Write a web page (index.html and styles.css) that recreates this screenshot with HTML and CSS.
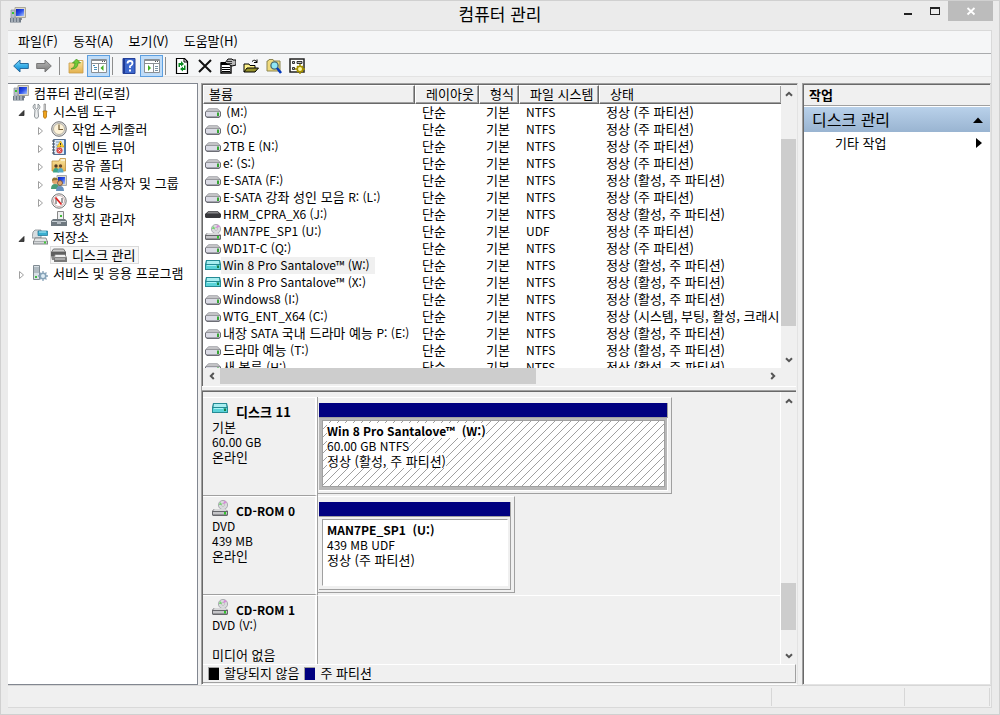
FILE: index.html
```html
<!DOCTYPE html>
<html lang="ko">
<head>
<meta charset="utf-8">
<title>컴퓨터 관리</title>
<link rel="stylesheet" href="styles.css">
</head>
<body>
<svg class="defs" aria-hidden="true">
  <defs>
    <linearGradient id="g-blue" x1="0" y1="0" x2="0" y2="1"><stop offset="0" stop-color="#8fdcf8"/><stop offset=".5" stop-color="#38aee8"/><stop offset="1" stop-color="#1581cc"/></linearGradient>
    <linearGradient id="g-gray" x1="0" y1="0" x2="0" y2="1"><stop offset="0" stop-color="#bbb"/><stop offset="1" stop-color="#777"/></linearGradient>
    <linearGradient id="g-screen" x1="0" y1="0" x2="1" y2="1"><stop offset="0" stop-color="#0a1fb8"/><stop offset=".5" stop-color="#2c50e8"/><stop offset="1" stop-color="#a9c6ff"/></linearGradient>
    <linearGradient id="g-folder" x1="0" y1="0" x2="0" y2="1"><stop offset="0" stop-color="#fbe7a2"/><stop offset="1" stop-color="#e3b04d"/></linearGradient>
    <symbol id="i-computer" viewBox="0 0 16 16"><path d="M5 .5h10.500v10H5z" fill="#dcd9cc" stroke="#aaa799"/><path d="M6 2h8v7H6z" fill="url(#g-screen)"/><path d="M1 3h4v8H1z" fill="#b9c0c9" stroke="#89919b" stroke-width=".7"/><path d="M2 5h2v2H2z" fill="#36c436"/><path d="M8 11h4v2H8z" fill="#8b8d91"/><path d="M0 11h11v4.500H0z" fill="#6f7a87"/><path d="M1 12h9M1 14h9" stroke="#d7dce2" stroke-dasharray="2 1"/></symbol>
    <symbol id="i-tools" viewBox="0 0 16 16"><path d="M3 1v4l1.500 1L6 5V1c3 2 2 5 0 6l.5 6c0 3-4 3-4 0L3 7C0 5 1 2 3 1z" fill="#eceeef" stroke="#747b80" stroke-width=".8"/><path d="M12 1h1.500v7H12z" fill="#ddd" stroke="#777" stroke-width=".6"/><path d="M11 8h4l-.5 2v4q-1.500 3-3 0v-4z" fill="#f0a41c" stroke="#a86700" stroke-width=".7"/></symbol>
    <symbol id="i-clock" viewBox="0 0 16 16"><circle cx="8" cy="8" r="7.300" fill="#dedede" stroke="#777"/><circle cx="8" cy="8" r="5.500" fill="#fdf2d7" stroke="#b7b2a4"/><path d="M8 3.500V8.500h4" fill="none" stroke="#765e35" stroke-width="1.200"/></symbol>
    <symbol id="i-event" viewBox="0 0 16 16"><path d="M2.500.5h12v15h-12z" fill="#dce8f4" stroke="#566f91"/><path d="M13 1h2v14h-2z" fill="#4f79ab"/><path d="M1 2h3M1 5h3M1 8h3M1 11h3M1 14h3" stroke="#454d58"/><path d="M5 3h4M5 6h3M5 9h2" stroke="#7997b5"/><path d="M9.500 2l3.500 6H6z" fill="#ffd335" stroke="#d2a000" stroke-width=".6"/><path d="M9.500 4v2M9.500 6.800v.7" stroke="#333"/><circle cx="8.500" cy="11.500" r="2.800" fill="#e0504e" stroke="#c33" stroke-width=".5"/><path d="M7.500 10.500l2 2m0-2l-2 2" stroke="#fff" stroke-width=".8"/></symbol>
    <symbol id="i-share" viewBox="0 0 16 16"><path d="M1 4h7l1-2.500h5.500V14H1z" fill="url(#g-folder)" stroke="#bd9140" stroke-width=".8"/><path d="M10 3h4" stroke="#fff"/><circle cx="5" cy="9" r="1.700" fill="#4f3b27"/><circle cx="9.500" cy="9" r="1.700" fill="#6b4829"/><path d="M2 15.500q0-4.500 3-4.500t3 4.500z" fill="#3da587"/><path d="M6.500 15.500q0-4.500 3-4.500t3 4.500z" fill="#58aac5"/></symbol>
    <symbol id="i-users" viewBox="0 0 16 16"><path d="M6 .5h9.500v10H6z" fill="#dddccf" stroke="#aaa"/><path d="M7 2h7v7H7z" fill="url(#g-screen)"/><circle cx="4" cy="6" r="3" fill="#e2a46d"/><path d="M1 6q0-5 5-3l1 2q-4 0-6 1z" fill="#8f7433"/><path d="M0 14q0-5 4-5t4 5z" fill="#489d78"/><circle cx="9" cy="8" r="2.500" fill="#dda66f" stroke="#6e4b31" stroke-width=".8"/><path d="M5 16q0-5 4-5t4 5z" fill="#6792bd"/></symbol>
    <symbol id="i-perf" viewBox="0 0 16 16"><circle cx="8" cy="8" r="7.200" fill="#f4f4f4" stroke="#777"/><circle cx="8" cy="8" r="5.500" fill="#fff" stroke="#b99" stroke-width=".8"/><path d="M5 11V5.500M11 10V5" stroke="#444" fill="none"/><path d="M4.500 4.500l6 7" stroke="#d22" stroke-width="1.800"/></symbol>
    <symbol id="i-device" viewBox="0 0 16 16"><path d="M6.500.5h6v8h-6z" fill="#eef0f0" stroke="#888"/><path d="M9 4h2v2H9z" fill="#43b739"/><path d="M2 8h12l2 2v5H0v-5z" fill="#6f7980"/><path d="M1 10.500h14" stroke="#c8d0d5"/><path d="M6 10h4v3H6z" fill="#b4bbc1"/></symbol>
    <symbol id="i-storage" viewBox="0 0 16 16"><path d="M1 3l2-2h6v8H0z" fill="#d7dde0" stroke="#848b90" stroke-width=".8"/><path d="M6 2h9.500v4.500H6z" fill="#3bafd0" stroke="#267c9b" stroke-width=".8"/><path d="M7 3h7" stroke="#b7f1fc"/><path d="M3 9h11l1.500 4h-14z" fill="#e3e5e6" stroke="#777" stroke-width=".8"/><path d="M1 12h15v3.500H1z" fill="#7f8487"/><path d="M2 12.500h13v2H2z" fill="#d4d7d9"/><path d="M12 12.500h2v2h-2z" fill="#42c83a"/></symbol>
    <symbol id="i-disks" viewBox="0 0 16 16"><path d="M2.500 2h10l2 3H.5z" fill="#ccc" stroke="#777"/><path d="M0 5h15v4H0z" fill="#5f5f5f"/><path d="M4 7.500h10l1.500 3h-12z" fill="#eee" stroke="#777" stroke-width=".8"/><path d="M3 10.500h13v4.500H3z" fill="#777"/><path d="M4 12h10" stroke="#ddd"/><path d="M0 9h3v4H1z" fill="#888"/></symbol>
    <symbol id="i-services" viewBox="0 0 16 16"><path d="M1.500.5h6v14h-6z" fill="#d8e0e5" stroke="#808b92"/><path d="M2 3h5M2 5h5M2 7h5" stroke="#87959e"/><path d="M3 11h2v2H3z" fill="#42ba42"/><circle cx="11" cy="11" r="2.800" fill="#ddebf4" stroke="#87a3b8" stroke-width="1.600"/><path d="M11 6v2m0 6v2M6 11h2m6 0h2M7.500 7.500l1.500 1.500m4 4l1.500 1.500m0-7L13 9m-4 4l-1.500 1.500" stroke="#87a3b8" stroke-width="1.300"/></symbol>
    <symbol id="i-drive" viewBox="0 0 16 12"><path d="M3.500 1.500h9L16 5v4l-2 2H2L0 9V5z" fill="#6d6e76"/><path d="M3.500 2h9l2.500 2.500H1z" fill="#c3c3c6"/><path d="M1 5h14v3.500l-1 1H2l-1-1z" fill="#dcdce6"/><path d="M12 5.500h2V9h-2z" fill="#38a635"/></symbol>
    <symbol id="i-dark" viewBox="0 0 16 12"><path d="M3.500 2h9L16 5v3l-1 1H1L0 8V5z" fill="#39393c"/><path d="M3.500 2.500h9L14 4.500H2z" fill="#858587"/></symbol>
    <symbol id="i-cyan" viewBox="0 0 16 12"><path d="M1 0h14l1 4v6H0V4z" fill="#258b95"/><path d="M2 1h12l.5 3h-13z" fill="#a8eef0"/><path d="M1 5h14v4H1z" fill="#5ad3d8"/><path d="M2 5.500h9" stroke="#a9f3f5"/><path d="M12 5.500h2v2.500h-2z" fill="#188045"/></symbol>
    <symbol id="i-cd" viewBox="0 0 16 16"><circle cx="11" cy="5" r="4.600" fill="#d9dadd" stroke="#9c9da3" stroke-width=".8"/><path d="M11 5L8 2l-1 3z" fill="#74d772"/><path d="M11 5l1-4 3 1z" fill="#d989da"/><circle cx="11" cy="5" r="1.300" fill="#fff" stroke="#999" stroke-width=".6"/><path d="M2 9h11l3 2v4l-1 1H1l-1-1v-4z" fill="#66676b"/><path d="M2.500 9h11l1.500 2H1z" fill="#d8d8da"/><path d="M1 12h14v2.500H1z" fill="#c5c5c8"/><path d="M12 12h2v2.500h-2z" fill="#32c42d"/></symbol>
    <symbol id="i-back" viewBox="0 0 16 16"><path d="M.7 8L7 2v3.500h8.300v5H7V14z" fill="url(#g-blue)" stroke="#276b9d" stroke-linejoin="round"/></symbol>
    <symbol id="i-forward" viewBox="0 0 16 16"><path d="M15.300 8L9 2v3.500H.7v5H9V14z" fill="url(#g-gray)" stroke="#777" stroke-linejoin="round"/></symbol>
    <symbol id="i-up" viewBox="0 0 16 16"><path d="M1 5h7l1-2.500h6V15H1z" fill="url(#g-folder)" stroke="#c99d48" stroke-width=".8"/><path d="M10.500 3.500h3" stroke="#fff"/><path d="M3 11q4-1 4-6H4.500L8.500 1l4 4h-2.500q0 6-7 6z" fill="#71c936" stroke="#3f9420" stroke-width=".7"/></symbol>
    <symbol id="i-pane-left" viewBox="0 0 16 16"><path d="M.5 1.500h15v13H.5z" fill="#fff" stroke="#8a8f94"/><path d="M1 2h14v1H1zM1 5h14v1H1zM7 6h1v8H7z" fill="#8a8f94"/><path d="M11 3h1v1h-1zm2 0h1v1h-1z" fill="#555"/><path d="M2 7h2v1H2zm1 2h3v1H3zm0 2h3v1H3z" fill="#4990ba"/><path d="M12.500 7v6L9.500 10z" fill="#42ae24"/></symbol>
    <symbol id="i-pane-right" viewBox="0 0 16 16"><path d="M.5 1.500h15v13H.5z" fill="#fff" stroke="#8a8f94"/><path d="M1 2h14v1H1zM1 5h14v1H1zM9 6h1v8H9z" fill="#8a8f94"/><path d="M11 3h1v1h-1zm2 0h1v1h-1z" fill="#555"/><path d="M11 8h3v1h-3zm0 2h3v1h-3zm0 2h3v1h-3z" fill="#7892a3"/><path d="M4 7v6l3-3z" fill="#42ae24"/></symbol>
    <symbol id="i-help" viewBox="0 0 16 16"><path d="M2 .5h12v15H2z" fill="#3c67cc" stroke="#233f98"/><path d="M2 1h2v14H2z" fill="#203b93"/><path d="M6.500 5.500q0-2.500 2.500-2.500t2.500 2.300q0 1.700-2.500 3V10" fill="none" stroke="#fff" stroke-width="1.800"/><path d="M8 11.500h2v2H8z" fill="#fff"/></symbol>
    <symbol id="i-refresh" viewBox="0 0 16 16"><path d="M2.500.5h8l3 3v12h-11z" fill="#fff" stroke="#000" stroke-width="1.200"/><path d="M10 .5v3.500h4" fill="none" stroke="#000"/><path d="M4.500 9V5H7V3l3 3-3 2.500V7H6v2zM11.500 7.500v4.500H9v1.500L6 11l3-2.500V10h1V7.500z" fill="#0b8b22"/></symbol>
    <symbol id="i-delete" viewBox="0 0 16 16"><path d="M2 2l12 12M14 2L2 14" fill="none" stroke="#111" stroke-width="2"/></symbol>
    <symbol id="i-props" viewBox="0 0 16 16"><path d="M1 5h10v10H1z" fill="#fff" stroke="#000" stroke-width="1.400"/><path d="M1 4h10v3H1z"/><path d="M2 9.500h8M2 11.500h8M2 13.500h8" stroke="#000"/><path d="M5 5l3-4h4l1 1h3v5l-4 1-4-2z" fill="#b8b8b8" stroke="#000"/><path d="M7 3.500h5M8 5.500h4" stroke="#333"/></symbol>
    <symbol id="i-open" viewBox="0 0 16 16"><path d="M1 14V6h5l1 1.500h5V10" fill="#fff38a" stroke="#000"/><path d="M1 14l3-4h11.500l-3.500 4z" fill="#96922b" stroke="#000"/><path d="M9 3.500q3-3 5 1m0-3v3h-3" fill="none" stroke="#000"/></symbol>
    <symbol id="i-find" viewBox="0 0 16 16"><path d="M1 13V3h1l1-1.500h4L8 3h6v10z" fill="#f0da7c" stroke="#8b8550"/><circle cx="8.500" cy="7.500" r="3.600" fill="#8fe6f6" stroke="#456c78" stroke-width="1.300"/><path d="M11 10l4 5" stroke="#0038bc" stroke-width="2.600"/></symbol>
    <symbol id="i-settings" viewBox="0 0 16 16"><path d="M1 1h14v13H1z" fill="#fff" stroke="#222" stroke-width="1.500"/><path d="M3.500 3.500h2v2h-2zm0 6h2v2h-2zM8 3.500h5v2H8z" fill="#bbb" stroke="#222" stroke-width=".9"/><circle cx="11" cy="11" r="2.800" fill="#fff8a2" stroke="#a49000" stroke-width="1.600"/><path d="M11 6v2m0 6v2M6 11h2m6 0h2M8 8l1 1m4 4l1 1m0-6l-1 1m-4 4l-1 1" stroke="#a49000" stroke-width="1.500"/></symbol>
    <symbol id="i-closed" viewBox="0 0 8 10"><path d="M1.500 1.500v7l4-3.500z" fill="#fff" stroke="#a0a0a0"/></symbol>
    <symbol id="i-opened" viewBox="0 0 8 10"><path d="M6 2.500v5H1z" fill="#404040" stroke="#262626" stroke-width=".8"/></symbol>
    <symbol id="i-chev" viewBox="0 0 8 8"><path d="M1 5.800L4 2.800l3 3" fill="none" stroke="#555" stroke-width="2"/></symbol>
  </defs>
</svg>

<div class="window">
  <header class="titlebar">
    <svg class="app-icon"><use href="#i-computer"/></svg>
    <h1 class="title">컴퓨터 관리</h1>
    <div class="window-buttons">
      <button class="win-btn" aria-label="최소화"><svg viewBox="0 0 10 10"><path d="M1 7h8v2H1z" fill="#222"/></svg></button>
      <button class="win-btn" aria-label="최대화"><svg viewBox="0 0 10 10"><path d="M0 1h10v8H0zM1 3v5h8V3z" fill="#222" fill-rule="evenodd"/></svg></button>
      <button class="win-btn close" aria-label="닫기"><svg viewBox="0 0 10 10"><path d="M1.500 2l7 6.500m0-6.500l-7 6.500" stroke="#fff" stroke-width="1.800"/></svg></button>
    </div>
  </header>

  <div class="client">
    <nav class="menubar">
      <button class="menu">파일(F)</button><button class="menu">동작(A)</button><button class="menu">보기(V)</button><button class="menu">도움말(H)</button>
    </nav>
    <div class="toolbar">
      <button class="tool" aria-label="뒤로"><svg><use href="#i-back"/></svg></button>
      <button class="tool" aria-label="앞으로"><svg><use href="#i-forward"/></svg></button>
      <span class="sep"></span>
      <button class="tool" aria-label="한 수준 위로"><svg><use href="#i-up"/></svg></button>
      <button class="tool on" aria-label="콘솔 트리"><svg><use href="#i-pane-left"/></svg></button>
      <span class="sep"></span>
      <button class="tool" aria-label="도움말"><svg><use href="#i-help"/></svg></button>
      <button class="tool on" aria-label="작업 창"><svg><use href="#i-pane-right"/></svg></button>
      <span class="sep"></span>
      <button class="tool" aria-label="새로 고침"><svg><use href="#i-refresh"/></svg></button>
      <button class="tool" aria-label="삭제"><svg><use href="#i-delete"/></svg></button>
      <button class="tool" aria-label="속성"><svg><use href="#i-props"/></svg></button>
      <button class="tool" aria-label="열기"><svg><use href="#i-open"/></svg></button>
      <button class="tool" aria-label="찾기"><svg><use href="#i-find"/></svg></button>
      <button class="tool" aria-label="설정"><svg><use href="#i-settings"/></svg></button>
    </div>

    <main class="panes">
      <ul class="tree">
        <li class="node root"><svg class="ico"><use href="#i-computer"/></svg><span class="label">컴퓨터 관리(로컬)</span></li>
        <li class="node"><svg class="arrow"><use href="#i-opened"/></svg><svg class="ico"><use href="#i-tools"/></svg><span class="label">시스템 도구</span></li>
        <li class="node deep"><svg class="arrow"><use href="#i-closed"/></svg><svg class="ico"><use href="#i-clock"/></svg><span class="label">작업 스케줄러</span></li>
        <li class="node deep"><svg class="arrow"><use href="#i-closed"/></svg><svg class="ico"><use href="#i-event"/></svg><span class="label">이벤트 뷰어</span></li>
        <li class="node deep"><svg class="arrow"><use href="#i-closed"/></svg><svg class="ico"><use href="#i-share"/></svg><span class="label">공유 폴더</span></li>
        <li class="node deep"><svg class="arrow"><use href="#i-closed"/></svg><svg class="ico"><use href="#i-users"/></svg><span class="label">로컬 사용자 및 그룹</span></li>
        <li class="node deep"><svg class="arrow"><use href="#i-closed"/></svg><svg class="ico"><use href="#i-perf"/></svg><span class="label">성능</span></li>
        <li class="node deep"><svg class="arrow"></svg><svg class="ico"><use href="#i-device"/></svg><span class="label">장치 관리자</span></li>
        <li class="node"><svg class="arrow"><use href="#i-opened"/></svg><svg class="ico"><use href="#i-storage"/></svg><span class="label">저장소</span></li>
        <li class="node deep"><svg class="arrow"></svg><span class="picked"><svg class="ico"><use href="#i-disks"/></svg><span class="label">디스크 관리</span></span></li>
        <li class="node"><svg class="arrow"><use href="#i-closed"/></svg><svg class="ico"><use href="#i-services"/></svg><span class="label">서비스 및 응용 프로그램</span></li>
      </ul>

      <section class="center">
        <div class="volumes">
          <div class="scroll-row">
            <div class="list">
              <table class="grid">
                <colgroup><col class="c-name"><col class="c-layout"><col class="c-type"><col class="c-fs"><col></colgroup>
                <thead><tr><th>볼륨</th><th>레이아웃</th><th>형식</th><th>파일 시스템</th><th>상태</th></tr></thead>
                <tbody>
                  <tr><td><span class="vol"><svg><use href="#i-drive"/></svg><span class="name en">&nbsp;(M:)</span></span></td><td>단순</td><td>기본</td><td class="en">NTFS</td><td>정상 (주 파티션)</td></tr>
                  <tr><td><span class="vol"><svg><use href="#i-drive"/></svg><span class="name en">&nbsp;(O:)</span></span></td><td>단순</td><td>기본</td><td class="en">NTFS</td><td>정상 (주 파티션)</td></tr>
                  <tr><td><span class="vol"><svg><use href="#i-drive"/></svg><span class="name en">2TB E (N:)</span></span></td><td>단순</td><td>기본</td><td class="en">NTFS</td><td>정상 (주 파티션)</td></tr>
                  <tr><td><span class="vol"><svg><use href="#i-drive"/></svg><span class="name en">e: (S:)</span></span></td><td>단순</td><td>기본</td><td class="en">NTFS</td><td>정상 (주 파티션)</td></tr>
                  <tr><td><span class="vol"><svg><use href="#i-drive"/></svg><span class="name en">E-SATA (F:)</span></span></td><td>단순</td><td>기본</td><td class="en">NTFS</td><td>정상 (활성, 주 파티션)</td></tr>
                  <tr><td><span class="vol"><svg><use href="#i-drive"/></svg><span class="name"><span class="en">E-SATA</span> 강좌 성인 모음 <span class="en">R: (L:)</span></span></span></td><td>단순</td><td>기본</td><td class="en">NTFS</td><td>정상 (주 파티션)</td></tr>
                  <tr><td><span class="vol"><svg><use href="#i-dark"/></svg><span class="name en">HRM_CPRA_X6 (J:)</span></span></td><td>단순</td><td>기본</td><td class="en">NTFS</td><td>정상 (활성, 주 파티션)</td></tr>
                  <tr><td><span class="vol"><svg class="tall"><use href="#i-cd"/></svg><span class="name en">MAN7PE_SP1 (U:)</span></span></td><td>단순</td><td>기본</td><td class="en">UDF</td><td>정상 (주 파티션)</td></tr>
                  <tr><td><span class="vol"><svg><use href="#i-drive"/></svg><span class="name en">WD1T-C (Q:)</span></span></td><td>단순</td><td>기본</td><td class="en">NTFS</td><td>정상 (주 파티션)</td></tr>
                  <tr><td><span class="vol chosen"><svg><use href="#i-cyan"/></svg><span class="name en">Win 8 Pro Santalove™ (W:)</span></span></td><td>단순</td><td>기본</td><td class="en">NTFS</td><td>정상 (활성, 주 파티션)</td></tr>
                  <tr><td><span class="vol"><svg><use href="#i-cyan"/></svg><span class="name en">Win 8 Pro Santalove™ (X:)</span></span></td><td>단순</td><td>기본</td><td class="en">NTFS</td><td>정상 (활성, 주 파티션)</td></tr>
                  <tr><td><span class="vol"><svg><use href="#i-drive"/></svg><span class="name en">Windows8 (I:)</span></span></td><td>단순</td><td>기본</td><td class="en">NTFS</td><td>정상 (활성, 주 파티션)</td></tr>
                  <tr><td><span class="vol"><svg><use href="#i-drive"/></svg><span class="name en">WTG_ENT_X64 (C:)</span></span></td><td>단순</td><td>기본</td><td class="en">NTFS</td><td>정상 (시스템, 부팅, 활성, 크래시</td></tr>
                  <tr><td><span class="vol"><svg><use href="#i-drive"/></svg><span class="name">내장 <span class="en">SATA</span> 국내 드라마 예능 <span class="en">P: (E:)</span></span></span></td><td>단순</td><td>기본</td><td class="en">NTFS</td><td>정상 (활성, 주 파티션)</td></tr>
                  <tr><td><span class="vol"><svg><use href="#i-drive"/></svg><span class="name">드라마 예능 <span class="en">(T:)</span></span></span></td><td>단순</td><td>기본</td><td class="en">NTFS</td><td>정상 (활성, 주 파티션)</td></tr>
                  <tr><td><span class="vol"><svg><use href="#i-drive"/></svg><span class="name">새 볼륨 <span class="en">(H:)</span></span></span></td><td>단순</td><td>기본</td><td class="en">NTFS</td><td>정상 (활성, 주 파티션)</td></tr>
                </tbody>
              </table>
            </div>
            <div class="vbar">
              <button class="sb" aria-label="위로"><svg><use href="#i-chev"/></svg></button>
              <div class="track"><span class="before-list"></span><span class="thumb thumb-list"></span></div>
              <button class="sb" aria-label="아래로"><svg class="down"><use href="#i-chev"/></svg></button>
            </div>
          </div>
          <div class="hbar">
            <button class="sb" aria-label="왼쪽"><svg class="left"><use href="#i-chev"/></svg></button>
            <div class="htrack"><span class="hthumb"></span></div>
            <button class="sb" aria-label="오른쪽"><svg class="right"><use href="#i-chev"/></svg></button>
          </div>
        </div>
        <div class="splitter"></div>
        <div class="disks">
          <div class="disk-list">
            <div class="disk">
              <div class="disk-info">
                <div class="disk-name"><svg><use href="#i-cyan"/></svg><b>디스크 11</b></div>
                <div>기본</div><div class="en">60.00 GB</div><div>온라인</div>
              </div>
              <div class="disk-area"><div class="disk-box large">
                <div class="stripe"></div>
                <div class="part selected"><div class="part-body">
                  <div class="en"><b class="mask">Win 8 Pro Santalove™&nbsp; (W:)</b></div>
                  <div class="en"><span class="mask">60.00 GB NTFS</span></div>
                  <div><span class="mask">정상 (활성, 주 파티션)</span></div>
                </div></div>
              </div></div>
            </div>
            <div class="disk">
              <div class="disk-info">
                <div class="disk-name"><svg class="tall"><use href="#i-cd"/></svg><b class="en">CD-ROM 0</b></div>
                <div class="en">DVD</div><div class="en">439 MB</div><div>온라인</div>
              </div>
              <div class="disk-area"><div class="disk-box small">
                <div class="stripe"></div>
                <div class="part"><div class="part-body">
                  <div class="en"><b>MAN7PE_SP1&nbsp; (U:)</b></div>
                  <div class="en">439 MB UDF</div>
                  <div>정상 (주 파티션)</div>
                </div></div>
              </div></div>
            </div>
            <div class="disk last">
              <div class="disk-info">
                <div class="disk-name"><svg class="tall"><use href="#i-cd"/></svg><b class="en">CD-ROM 1</b></div>
                <div class="en">DVD (V:)</div><div>&nbsp;</div><div>미디어 없음</div>
              </div>
              <div class="disk-area"></div>
            </div>
          </div>
          <div class="vbar lower">
            <button class="sb" aria-label="위로"><svg><use href="#i-chev"/></svg></button>
            <div class="track"><span class="before-disk"></span><span class="thumb thumb-disk"></span></div>
            <button class="sb" aria-label="아래로"><svg class="down"><use href="#i-chev"/></svg></button>
          </div>
        </div>
        <div class="legend"><span class="swatch black"></span><span>할당되지 않음</span><span class="swatch navy"></span><span>주 파티션</span></div>
      </section>

      <aside class="actions">
        <h2 class="actions-head">작업</h2>
        <button class="actions-group"><span>디스크 관리</span><svg viewBox="0 0 10 6"><path d="M0 6l5-5.500 5 5.500z"/></svg></button>
        <button class="actions-item"><span>기타 작업</span><svg viewBox="0 0 6 10"><path d="M0 0l6 5-6 5z"/></svg></button>
      </aside>
    </main>

    <footer class="status"><span class="s-main"></span><span class="s-mid"></span><span class="s-end"></span></footer>
  </div>
</div>
</body>
</html>
```
FILE: styles.css
```css
* { box-sizing: border-box; }
body {
  margin: 0;
  font: 13px/17px "Noto Sans CJK KR", "Open Sans", sans-serif;
  color: #000;
}
button {
  margin: 0;
  padding: 0;
  border: 0;
  background: none;
  color: inherit;
  font: inherit;
}
svg { display: block; flex: none; width: 16px; height: 16px; }
.defs { position: absolute; width: 0; height: 0; }
.en { font-size: 12px; }

.window {
  display: flex;
  flex-direction: column;
  height: 100vh;
  padding: 0 7px 6px;
  border: 1px solid #d0d0d0;
  background: #ebebeb;
}

/* Title bar */
.titlebar {
  display: grid;
  grid-template-columns: 1fr auto 1fr;
  height: 29px;
  flex: none;
}
.app-icon { margin: 6px 0 0 2px; }
.title { margin: 0; font-size: 17px; font-weight: 400; line-height: 25px; }
.window-buttons { display: flex; justify-content: flex-end; align-items: flex-start; margin-right: -1px; }
.win-btn { display: grid; place-items: center; width: 27px; height: 20px; }
.win-btn svg { width: 10px; height: 10px; }
.win-btn.close { width: 45px; background: #bcbcbc; }

.client {
  display: flex;
  flex: 1;
  flex-direction: column;
  min-height: 0;
  border: 1px solid #d9d9d9;
  border-left: 0;
  background: #f0f0f0;
}

/* Menu and tools */
.menubar { display: flex; gap: 15px; height: 23px; flex: none; padding: 0 0 2px 10px; border-bottom: 1px solid #a9abad; background: #f5f6f7; }
.menu { line-height: 18px; }
.toolbar { display: flex; align-items: flex-start; height: 23px; flex: none; padding: 1px 0 0 1px; border-bottom: 1px solid #e3e3e3; background: #f5f6f7; }
.tool { display: grid; place-items: center; width: 23px; height: 22px; }
.tool.on { border: 1px solid #5c9fe0; background: #bfdcf8; }
.sep { width: 1px; height: 18px; margin: 2px 4px 0; background: #8d8d8d; }
.on + .sep { margin-left: 2px; }

.panes { display: flex; flex: 1; gap: 3px; min-height: 0; padding-top: 6px; }

/* Console tree */
.tree {
  width: 190px;
  flex: none;
  margin: 0;
  padding: 0 0 0 5px;
  border: 1px solid #828790;
  border-left: 0;
  background: #fff;
  list-style: none;
}
.node { display: flex; align-items: center; height: 18px; padding-left: 5px; white-space: nowrap; }
.node.root { padding-left: 0; }
.node.deep { padding-left: 24px; }
.arrow { width: 8px; height: 10px; margin: 4px 6px 0 0; }
.label { margin-left: 5px; padding-bottom: 2px; }
.picked { display: flex; align-items: center; height: 18px; margin-left: -1px; padding-right: 3px; border: 1px solid #dadada; background: #f7f7f7; }

/* Volume list */
.center {
  display: flex;
  flex: 1;
  flex-direction: column;
  min-width: 0;
  border: 1px solid #a0a0a0;
  border-right-color: #e3e3e3;
  border-bottom-color: #fff;
  box-shadow: inset 1px 1px #696969;
  padding: 1px 1px 1px 1px;
}
.volumes { display: flex; flex: 0 0 299px; flex-direction: column; min-height: 0; }
.scroll-row { display: flex; flex: 1; min-height: 0; }
.list { flex: 1; min-width: 0; overflow: hidden; background: #fff; }
.grid { width: 100%; border-collapse: separate; border-spacing: 0; table-layout: fixed; }
.c-name { width: 212px; }
.c-layout { width: 64px; }
.c-type { width: 40px; }
.c-fs { width: 80px; }
.grid th {
  height: 19px;
  padding: 0 0 2px 10px;
  border-top: 1px solid #fff;
  border-left: 1px solid #fff;
  border-right: 1px solid #696969;
  border-bottom: 1px solid #696969;
  background: #f0f0f0;
  box-shadow: inset -1px -1px #a0a0a0;
  font-weight: 400;
  line-height: 15px;
  text-align: left;
  white-space: nowrap;
}
.grid th:first-child { padding-left: 5px; }
.grid th:last-child { border-right: 0; }
.grid td { height: 17px; padding: 0 0 0 7px; line-height: 15px; vertical-align: top; white-space: nowrap; }
.grid td:first-child { padding-left: 2px; }
.vol { display: flex; align-items: center; width: max-content; height: 17px; }
.vol svg { height: 12px; }
.vol svg.tall { height: 16px; }
.name { padding: 0 5px 2px 2px; }
.chosen .name { background: #f0f0f0; }

/* Scroll bars */
.vbar { display: flex; flex: none; flex-direction: column; width: 15px; background: #f0f0f0; }
.sb { display: grid; flex: none; place-items: center; width: 15px; height: 17px; }
.sb svg { width: 8px; height: 8px; }
.sb .down { transform: rotate(180deg); }
.sb .left { transform: rotate(-90deg); }
.sb .right { transform: rotate(90deg); }
.track { display: flex; flex: 1; flex-direction: column; }
.thumb { background: #cdcdcd; }
.before-list { flex: 0 0 15%; }
.thumb-list { flex: 0 0 75%; }
.before-disk { flex: 0 0 73%; }
.thumb-disk { flex: 0 0 20%; }
.hbar { display: flex; flex: none; height: 16px; margin-right: 15px; }
.hbar .sb { width: 17px; height: 15px; }
.htrack { display: flex; flex: 1; }
.hthumb { width: 58%; background: #cdcdcd; }

.splitter { flex: none; height: 8px; margin-left: -1px; border-bottom: 1px solid #696969; box-shadow: inset 0 -1px #a0a0a0, inset 0 -4px #f0f0f0, inset 0 -5px #fff; }

/* Disk map */
.disks { display: flex; flex: 1; min-height: 0; }
.disk-list { flex: 1; min-width: 0; overflow: hidden; padding-top: 5px; border-right: 1px solid #fff; line-height: 15px; }
.disk { display: flex; height: 99px; }
.disk-info { width: 114px; flex: none; padding: 5px 0 0 9px; border-top: 1px solid #fff; border-right: 2px solid #fff; border-bottom: 1px solid #a0a0a0; white-space: nowrap; }
.disk-name { display: flex; align-items: center; gap: 8px; height: 16px; }
.disk-name svg { height: 12px; margin-bottom: 4px; }
.disk-name svg.tall { height: 16px; }
.disk-area { flex: 1; min-width: 0; border-left: 1px solid #a0a0a0; }
.last .disk-area, .last .disk-info { border-top: 1px solid #fff; border-bottom: 0; }
.disk-box { display: flex; flex-direction: column; max-width: 100%; height: 97px; padding: 5px 3px 2px 1px; border: 1px solid #a0a0a0; border-top-color: #fff; border-left: 0; }
.large { width: 354px; }
.small { width: 197px; }
.stripe { flex: none; height: 15px; background: #000080; border-right: 1px solid #a0a0a0; border-bottom: 1px solid #a0a0a0; }
.part { display: flex; flex: 1; padding: 2px 2px 3px 3px; border-right: 1px solid #a0a0a0; border-bottom: 1px solid #a0a0a0; background: #f0f0f0; white-space: nowrap; }
.part-body { flex: 1; padding: 2px 0 0 4px; border: 1px solid #fff; border-top-color: #a0a0a0; border-left-color: #a0a0a0; background: #fff; }
.part.selected { border-color: #fff; background: #b8b8b8; }
.selected .part-body {
  border-color: #a0a0a0;
  background: #fff url("data:image/svg+xml,%3Csvg xmlns='http://www.w3.org/2000/svg' width='8' height='8'%3E%3Cpath d='M0 7h1v1H0zM1 6h1v1H1zM2 5h1v1H2zM3 4h1v1H3zM4 3h1v1H4zM5 2h1v1H5zM6 1h1v1H6zM7 0h1v1H7z' fill='%23a0a0a0'/%3E%3C/svg%3E");
}
.mask { display: block; width: max-content; background: #fff; }

.legend { display: flex; flex: none; align-items: center; gap: 5px; height: 19px; padding: 0 0 1px 5px; border-top: 1px solid #fff; border-right: 1px solid #a0a0a0; border-bottom: 1px solid #a0a0a0; line-height: 13px; }
.legend span { padding-bottom: 2px; }
.swatch { width: 11px; height: 13px; border-top: 1px solid #a0a0a0; border-left: 1px solid #a0a0a0; }
.black { background: #000; }
.navy { background: #000080; }

/* Actions */
.actions { width: 189px; flex: none; margin-left: 1px; border: 1px solid #a0a0a0; border-right: 1px solid #e3e3e3; border-bottom-color: #e3e3e3; box-shadow: inset 1px 1px #696969; background: #fff; padding: 1px 0 0 1px; }
.actions-head { height: 21px; margin: 0; padding-left: 5px; border-bottom: 1px solid #a0a0a0; background: #f0f0f0; font-size: 13px; line-height: 19px; }
.actions-group { display: flex; align-items: center; justify-content: space-between; width: 100%; height: 25px; margin-top: 1px; padding: 0 7px 0 8px; background: linear-gradient(#b9d1ea, #99b4d1); font-size: 16px; }
.actions-group svg { width: 10px; height: 6px; }
.actions-item { display: flex; align-items: center; justify-content: space-between; width: 100%; height: 21px; padding: 0 8px 0 31px; }
.actions-item svg { width: 6px; height: 10px; }

/* Status bar */
.status { display: flex; flex: none; height: 22px; padding: 2px 1px 1px 0; border-top: 1px solid #d7d7d7; }
.status span { border-right: 1px solid #d7d7d7; }
.s-main { flex: 1; }
.s-mid { width: 133px; }
.s-end { width: 85px; }
```
